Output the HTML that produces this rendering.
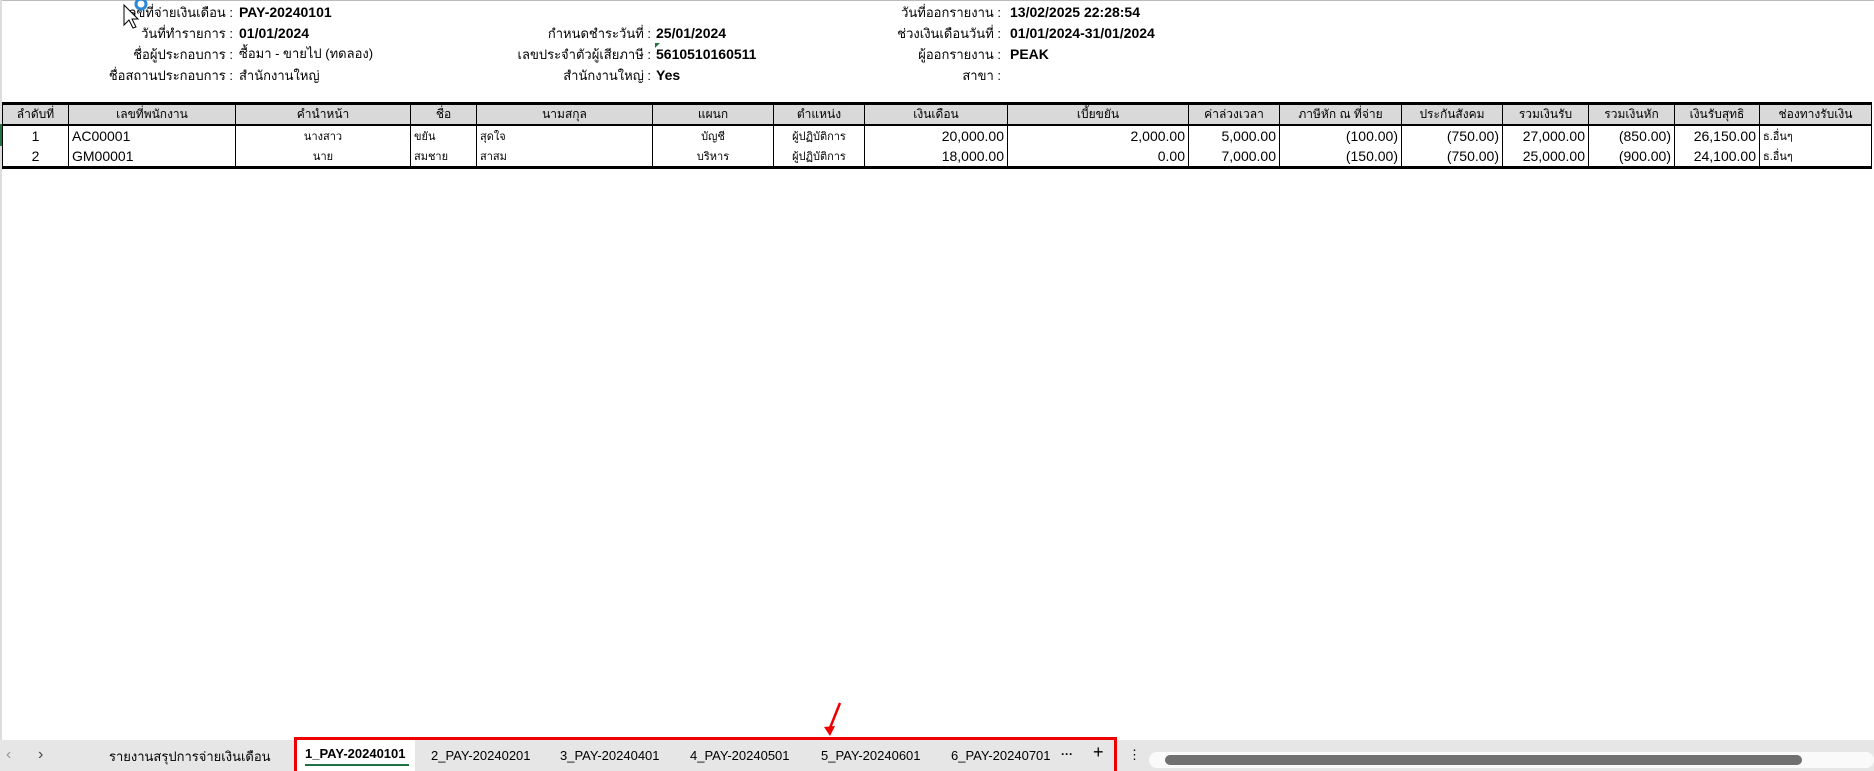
<!DOCTYPE html>
<html><head><meta charset="utf-8"><style>
*{margin:0;padding:0;box-sizing:border-box}
body{width:1874px;height:771px;overflow:hidden;background:#fff;font-family:"Liberation Sans","Noto Sans CJK SC",sans-serif;position:relative;color:#000}
.t{position:absolute;font-size:13px;white-space:nowrap;line-height:16px}
.l{text-align:right}
.b{font-weight:bold;font-size:14px}
table{position:absolute;left:2px;top:102px;border-collapse:collapse;font-size:14px}
td,th{border:1px solid #000;height:21px;padding:0 3px;white-space:nowrap;overflow:hidden}
th{background:#d9d9d9;font-weight:normal;font-size:12px;text-align:center}
tr.h th{border-top:3px solid #000;border-bottom:2px solid #000}
tbody tr td{border-top:none;border-bottom:none}
tbody tr:last-child td{border-bottom:3px solid #000}
.r{text-align:right}.c{text-align:center}.s{font-size:11px}
</style></head><body>
<div style="position:absolute;left:0;top:0;width:1874px;height:1px;background:#bbb"></div>
<div style="position:absolute;left:0;top:0;width:2px;height:740px;background:#ddd"></div>
<div style="position:absolute;left:0;top:124px;width:3px;height:22px;background:#217346"></div>

<div class="t l" style="right:1641px;top:5px">เลขที่จ่ายเงินเดือน :</div><div class="t b" style="left:239px;top:4px">PAY-20240101</div>
<div class="t l" style="right:1641px;top:26px">วันที่ทำรายการ :</div><div class="t b" style="left:239px;top:25px">01/01/2024</div>
<div class="t l" style="right:1641px;top:47px">ชื่อผู้ประกอบการ :</div><div class="t b" style="left:239px;top:46px;font-weight:normal;font-size:13px">ซื้อมา - ขายไป (ทดลอง)</div>
<div class="t l" style="right:1641px;top:68px">ชื่อสถานประกอบการ :</div><div class="t" style="left:239px;top:68px">สำนักงานใหญ่</div>

<div class="t l" style="right:1223px;top:26px">กำหนดชำระวันที่ :</div><div class="t b" style="left:656px;top:25px">25/01/2024</div>
<div class="t l" style="right:1223px;top:47px">เลขประจำตัวผู้เสียภาษี :</div><div class="t b" style="left:656px;top:46px">5610510160511</div>
<div style="position:absolute;left:655px;top:43px;width:0;height:0;border-top:5px solid #217346;border-right:5px solid transparent"></div>
<div class="t l" style="right:1223px;top:68px">สำนักงานใหญ่ :</div><div class="t b" style="left:656px;top:67px">Yes</div>

<div class="t l" style="right:873px;top:5px">วันที่ออกรายงาน :</div><div class="t b" style="left:1010px;top:4px">13/02/2025 22:28:54</div>
<div class="t l" style="right:873px;top:26px">ช่วงเงินเดือนวันที่ :</div><div class="t b" style="left:1010px;top:25px">01/01/2024-31/01/2024</div>
<div class="t l" style="right:873px;top:47px">ผู้ออกรายงาน :</div><div class="t b" style="left:1010px;top:46px">PEAK</div>
<div class="t l" style="right:873px;top:68px">สาขา :</div>

<svg style="position:absolute;left:122px;top:0" width="30" height="30"><path d="M2 5 L2 25 L7 20 L11 28 L14 27 L10 19 L16 19 Z" fill="#fff" stroke="#000" stroke-width="1"/><circle cx="19" cy="4" r="5" fill="none" stroke="#2b88d8" stroke-width="3"/></svg>

<table>
<colgroup><col style="width:66px"><col style="width:167px"><col style="width:175px"><col style="width:66px"><col style="width:176px"><col style="width:121px"><col style="width:91px"><col style="width:143px"><col style="width:181px"><col style="width:91px"><col style="width:122px"><col style="width:101px"><col style="width:86px"><col style="width:86px"><col style="width:85px"><col style="width:112px"></colgroup>
<tr class="h"><th>ลำดับที่</th><th>เลขที่พนักงาน</th><th>คำนำหน้า</th><th>ชื่อ</th><th>นามสกุล</th><th>แผนก</th><th>ตำแหน่ง</th><th>เงินเดือน</th><th>เบี้ยขยัน</th><th>ค่าล่วงเวลา</th><th>ภาษีหัก ณ ที่จ่าย</th><th>ประกันสังคม</th><th>รวมเงินรับ</th><th>รวมเงินหัก</th><th>เงินรับสุทธิ</th><th>ช่องทางรับเงิน</th></tr>
<tbody>
<tr><td class="c">1</td><td>AC00001</td><td class="c s">นางสาว</td><td class="s">ขยัน</td><td class="s">สุดใจ</td><td class="c s">บัญชี</td><td class="c s">ผู้ปฏิบัติการ</td><td class="r">20,000.00</td><td class="r">2,000.00</td><td class="r">5,000.00</td><td class="r">(100.00)</td><td class="r">(750.00)</td><td class="r">27,000.00</td><td class="r">(850.00)</td><td class="r">26,150.00</td><td class="s">ธ.อื่นๆ</td></tr>
<tr><td class="c">2</td><td>GM00001</td><td class="c s">นาย</td><td class="s">สมชาย</td><td class="s">สาสม</td><td class="c s">บริหาร</td><td class="c s">ผู้ปฏิบัติการ</td><td class="r">18,000.00</td><td class="r">0.00</td><td class="r">7,000.00</td><td class="r">(150.00)</td><td class="r">(750.00)</td><td class="r">25,000.00</td><td class="r">(900.00)</td><td class="r">24,100.00</td><td class="s">ธ.อื่นๆ</td></tr>
</tbody></table>

<svg style="position:absolute;left:810px;top:700px" width="40" height="40"><path d="M30 3 L20 28" stroke="#e00" stroke-width="2.5"/><path d="M14 27 L20 36 L25 26 Z" fill="#e00"/></svg>

<div style="position:absolute;left:0;top:740px;width:1874px;height:31px;background:#e6e6e6"></div>
<div class="t" style="left:6px;top:747px;font-size:16px;color:#999">&lsaquo;</div>
<div class="t" style="left:38px;top:747px;font-size:16px;color:#444">&rsaquo;</div>
<div class="t" style="left:109px;top:749px;font-size:13px">รายงานสรุปการจ่ายเงินเดือน</div>
<div style="position:absolute;left:294px;top:737px;width:823px;height:34px;border:3px solid #e00;border-bottom:none"></div>
<div style="position:absolute;left:297px;top:740px;width:118px;height:31px;background:#fff"></div>
<div style="position:absolute;left:305px;top:764px;width:104px;height:2px;background:#217346"></div>
<div class="t" style="left:305px;top:746px;font-size:13px;font-weight:bold">1_PAY-20240101</div>
<div class="t" style="left:431px;top:748px;font-size:13px">2_PAY-20240201</div>
<div class="t" style="left:560px;top:748px;font-size:13px">3_PAY-20240401</div>
<div class="t" style="left:690px;top:748px;font-size:13px">4_PAY-20240501</div>
<div class="t" style="left:821px;top:748px;font-size:13px">5_PAY-20240601</div>
<div class="t" style="left:951px;top:748px;font-size:13px">6_PAY-20240701</div>
<div class="t" style="left:1061px;top:746px;font-size:12px;font-weight:bold">···</div>
<div class="t" style="left:1093px;top:744px;font-size:18px">+</div>
<div class="t" style="left:1128px;top:747px;font-size:13px">⋮</div>
<div style="position:absolute;left:1149px;top:752px;width:725px;height:16px;background:#fafafa;border-radius:8px"></div>
<div style="position:absolute;left:1165px;top:755px;width:637px;height:10px;background:#707070;border-radius:5px"></div>
</body></html>
